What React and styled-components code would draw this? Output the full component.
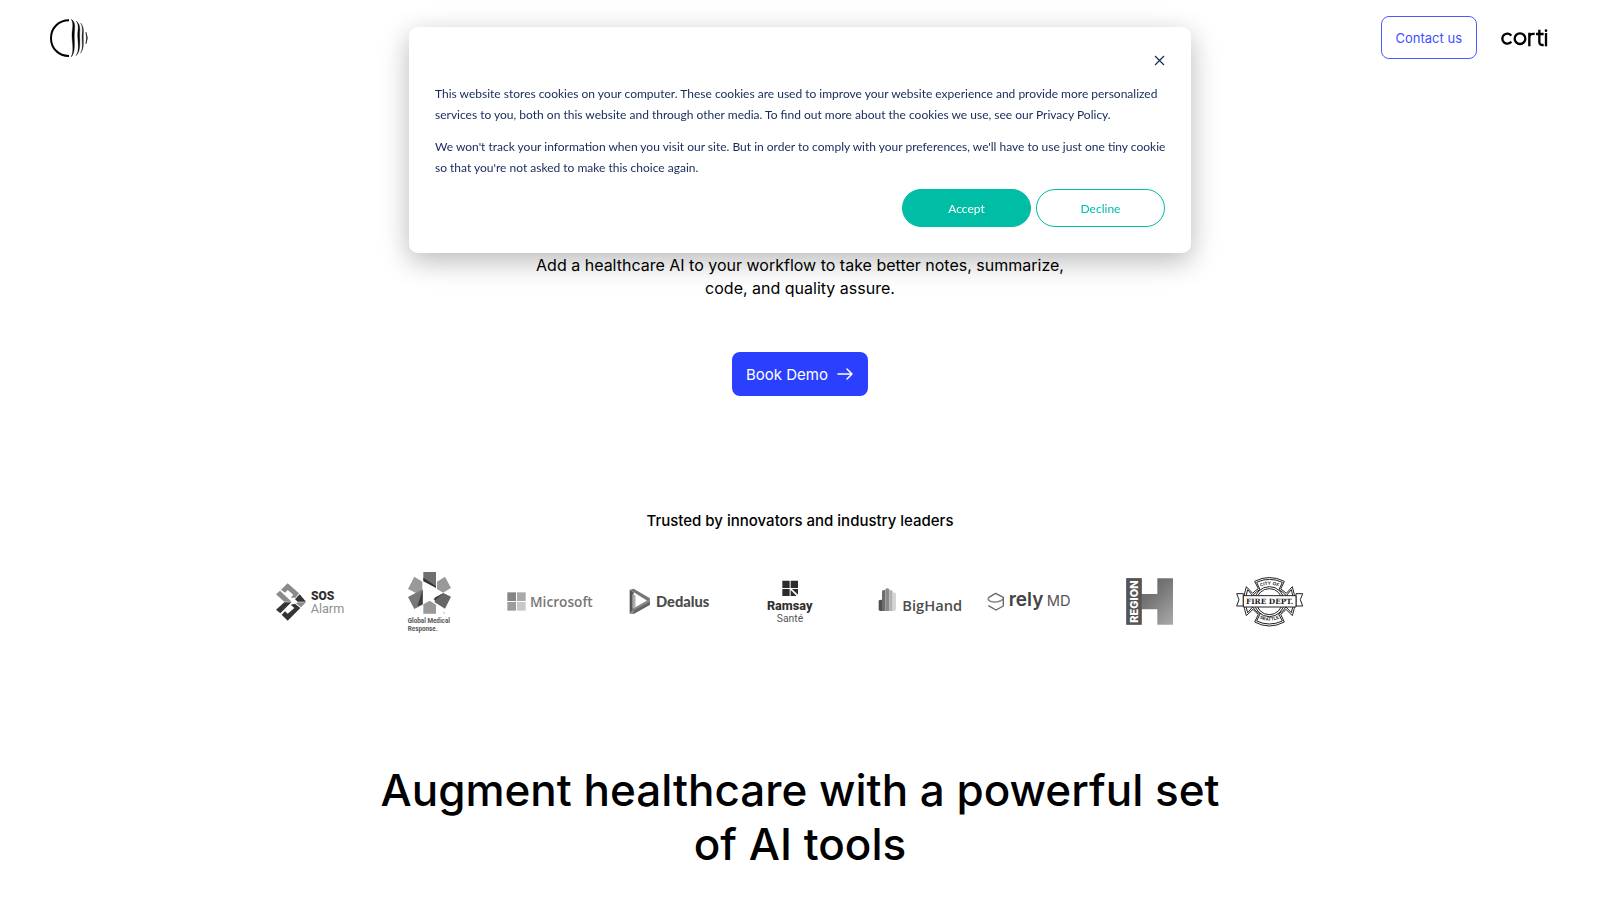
import React from "react";
import styled, { createGlobalStyle } from "styled-components";

const GlobalStyle = createGlobalStyle`
  *, *::before, *::after { box-sizing: border-box; }
  body {
    margin: 0;
    background: #fff;
    color: #000;
    font-family: Inter, "Liberation Sans", sans-serif;
    overflow-x: hidden;
  }
  a { text-decoration: none; }
`;

const Header = styled.header`
  display: flex;
  align-items: center;
  justify-content: space-between;
  height: 75px;
  padding: 0 51px 0 49px;
`;

const HomeLink = styled.a`
  display: flex;
  color: #000;
`;

const HeaderActions = styled.nav`
  display: flex;
  align-items: center;
  gap: 24px;
`;

const ContactLink = styled.a`
  display: flex;
  align-items: center;
  height: 43px;
  padding: 0 14px;
  border: 1px solid #4a5bff;
  border-radius: 8px;
  color: #3d50ff;
  font-size: 13px;
`;

const Hero = styled.section`
  display: flex;
  flex-direction: column;
  align-items: center;
  padding: 179px 24px 0;
`;

const Lead = styled.p`
  max-width: 560px;
  margin: 0 0 52px;
  font-size: 16px;
  line-height: 23px;
  text-align: center;
`;

const DemoLink = styled.a`
  display: flex;
  align-items: center;
  gap: 9px;
  height: 44px;
  padding: 0 14px;
  border-radius: 8px;
  background: #2b3fff;
  color: #fff;
  font-size: 15px;
`;

const Trusted = styled.section`
  padding-top: 114px;
`;

const TrustedTitle = styled.h3`
  margin: 0 0 28px;
  font-size: 15px;
  line-height: 22px;
  font-weight: 500;
  text-align: center;
`;

const LogoRow = styled.ul`
  display: flex;
  flex-wrap: wrap;
  max-width: 1100px;
  margin: 0 auto;
  padding: 0;
  list-style: none;
`;

const LogoItem = styled.li`
  width: 120px;
  height: 90px;

  svg { display: block; }
`;

const ToolsTitle = styled.h2`
  max-width: 870px;
  margin: 0 auto;
  padding: 113px 0 28px;
  font-size: 44px;
  line-height: 54px;
  font-weight: 500;
  text-align: center;
`;

const CookieDialog = styled.section`
  position: fixed;
  z-index: 10;
  top: 27px;
  left: 50%;
  width: min(782px, 94vw);
  transform: translateX(-50%);
  display: flex;
  flex-direction: column;
  padding: 26px;
  border-radius: 9px;
  background: #fff;
  box-shadow: 0 8px 28px rgba(0, 0, 0, 0.28);
  color: #15295a;
  font-family: Lato, "Liberation Sans", sans-serif;
`;

const CloseButton = styled.button`
  display: flex;
  align-self: flex-end;
  margin: 0 0 14px;
  padding: 2px 0 2px;
  border: 0;
  background: none;
  color: #15295a;
  cursor: pointer;
`;

const CookieText = styled.p`
  margin: 0 -8px 11px 0;
  font-size: 12px;
  line-height: 21px;
`;

const CookieActions = styled.div`
  display: flex;
  justify-content: flex-end;
  gap: 5px;
`;

const CookieButton = styled.button`
  width: 129px;
  height: 38px;
  border: 1px solid #00bda5;
  border-radius: 20px;
  background: ${(p) => (p.$filled ? "#00bda5" : "#fff")};
  color: ${(p) => (p.$filled ? "#fff" : "#00bda5")};
  font-family: inherit;
  font-size: 12px;
  cursor: pointer;
`;

function CortiMark() {
  return (
    <svg width="40" height="40" viewBox="57 53 120 120" aria-hidden="true" fill="none" stroke="#000">
      <path d="M117 60C85 60 63 84 63 113.500S85 167 117 167" strokeWidth="6" />
      <path d="M123 57C132 66 127 87 126 100 125 120 134 153 123 170 138 159 132 119 133 101 134 83 138 64 123 57Z" fill="#000" strokeWidth="1" />
      <path d="M138 62C149 74 143 90 143 104 143 122 150 151 138 166 153 153 149 123 149 105 149 88 153 73 138 62Z" fill="#000" strokeWidth="1" />
      <path d="M152 68C160 82 156 97 156 112S160 145 151 159C163 145 160 127 160 112S164 83 152 68Z" fill="#222" stroke="#222" strokeWidth="1" />
      <path d="M168 96Q176 113 168 130Q172 113 168 96Z" fill="#222" stroke="#222" strokeWidth="2" />
    </svg>
  );
}

function CortiWordmark() {
  return (
    <svg width="48" height="20" viewBox="423 83 144 60" role="img" aria-label="corti" fill="none" stroke="#000" strokeWidth="7">
      <path d="M454 106A15 15 0 1 0 454 124" />
      <circle cx="480" cy="115" r="16" />
      <path d="M508 138V97M508 114C508 102 514 99 524 101" />
      <path d="M538 88V125Q538 135 551 134M528 101H551" />
      <path d="M558 98V138" />
      <circle cx="558" cy="91" r="4" fill="#000" stroke="none" />
    </svg>
  );
}

function Logo({ x, y = 0, label, children }) {
  return (
    <LogoItem>
      <svg width="120" height="90" viewBox={`${x} ${y} 360 270`} role="img" aria-label={label}>
        {children}
      </svg>
    </LogoItem>
  );
}

function SosAlarm() {
  return (
    <Logo x={-30} label="SOS Alarm">
      <g fill="#8b8b8b">
        <path d="M63 89L83 70 117 100 107 113H92L100 104 83 90 75 98Z" />
        <path d="M48 103L60 92 95 125H73Z" />
        <path d="M114 127H138L123 142 108 130Z" />
      </g>
      <g fill="#343434">
        <path d="M73 127H94L61 160 48 149Z" />
        <path d="M105 118L119 103 138 125H113Z" />
        <path d="M65 164L75 154 83 161 103 144 92 134 105 131 121 144 83 182Z" />
      </g>
      <text x="153" y="120" fontFamily="Roboto" fontWeight="900" fontSize="36" fill="#303030">SOS</text>
      <text x="152" y="158" fontFamily="Roboto" fontSize="38" fill="#909090">Alarm</text>
    </Logo>
  );
}

function GlobalMedical() {
  return (
    <Logo x={330} label="Global Medical Response">
      <path d="M490 36H528V82L490 60Z" fill="#707070" />
      <path d="M490 53L528 79V84L490 64Z" fill="#333" />
      <path d="M463 50L487 65V90L468 99 444 87Z" fill="#999" />
      <path d="M555 50L573 84 549 98 531 88V65Z" fill="#999" />
      <path d="M444 111L488 88V134L463 147Z" fill="#777" />
      <path d="M488 89V132L472 139Z" fill="#3c3c3c" />
      <path d="M524 112L550 99 573 110 555 146 524 127Z" fill="#666" />
      <path d="M520 118L550 99 526 120Z" fill="#333" />
      <path d="M490 133L509 122 528 134V161H490Z" fill="#999" />
      <path d="M490 65L549 98 490 131Z" fill="#fff" />
      <circle cx="552" cy="159" r="2" fill="#999" />
      <g fontFamily="Roboto" fontSize="19" fontWeight="700" fill="#555">
        <text x="443" y="190">Global Medical</text>
        <text x="443" y="212">Response.</text>
      </g>
    </Logo>
  );
}

function Microsoft() {
  return (
    <Logo x={-30} label="Microsoft">
      <path d="M22 97H48V123H22Z" fill="#858585" />
      <path d="M51 97H77V123H51Z" fill="#aaa" />
      <path d="M22 126H48V152H22Z" fill="#9b9b9b" />
      <path d="M51 126H77V152H51Z" fill="#c8c8c8" />
      <text x="90" y="141" fontFamily="Open Sans" fontWeight="600" fontSize="41" fill="#777">Microsoft</text>
    </Logo>
  );
}

function Dedalus() {
  return (
    <Logo x={330} label="Dedalus">
      <path d="M389 89L401 97V151L389 161Z" fill="#555" />
      <path d="M389 89L401 86 450 115 448 126Z" fill="#777" />
      <path d="M389 161L400 162 450 134V116L437 123 401 144Z" fill="#8a8a8a" />
      <path d="M397 101L407 107V139L397 147Z" fill="#aaa" />
      <path d="M407 107L438 123 407 140Z" fill="#fff" />
      <path d="M401 162L450 134V125L401 151Z" fill="#666" />
      <text x="468" y="142" fontFamily="Lato" fontWeight="900" fontSize="44" fill="#4c4c4c">Dedalus</text>
    </Logo>
  );
}

function Ramsay() {
  return (
    <Logo x={-60} label="Ramsay Santé">
      <g fill="#2c2c2c">
        <path d="M97 62H119V84H97ZM122 62H144V84H122ZM97 87H119V108H97Z" />
        <path d="M126 87H144V104ZM122 90L140 108H122Z" />
      </g>
      <text x="119" y="149" textAnchor="middle" fontFamily="Roboto" fontWeight="800" fontSize="38" fill="#303030">Ramsay</text>
      <text x="120" y="186" textAnchor="middle" fontFamily="Roboto" fontSize="31" fill="#555">Santé</text>
    </Logo>
  );
}

function BigHand() {
  return (
    <Logo x={300} label="BigHand">
      <path d="M386 123Q386 119 396 119V153H391Q386 153 386 148Z" fill="#505050" />
      <path d="M396 94Q396 90 406 90V153H396Z" fill="#6d6d6d" />
      <path d="M406 88Q411 82 418 88V153H406Z" fill="#8a8a8a" />
      <path d="M418 90Q428 89 428 95V153H418Z" fill="#b0b0b0" />
      <path d="M428 97Q438 97 438 102V146Q438 153 428 153Z" fill="#d4d4d4" />
      <text x="457" y="154" fontFamily="Open Sans" fontWeight="600" fontSize="44" fill="#4d4d4d">BigHand</text>
    </Logo>
  );
}

function RelyMd() {
  return (
    <Logo x={-30} label="relyMD">
      <g fill="none" strokeWidth="5" strokeLinejoin="round">
        <path d="M25 113V119Q30 127 45 126C57 125 65 122 70 116" stroke="#8a8a8a" />
        <path d="M25 113L47 100 70 112V138L48 150 25 137" stroke="#666" strokeWidth="4" />
      </g>
      <text x="86" y="139" fontFamily="Inter" fontWeight="600" fontSize="57" fill="#444">rely</text>
      <text x="200" y="139" fontFamily="Inter" fontWeight="400" fontSize="44" fill="#555">MD</text>
    </Logo>
  );
}

function RegionH() {
  return (
    <Logo x={330} label="Region H">
      <defs>
        <linearGradient id="region-fade" x1="0" y1="0" x2="1" y2="1">
          <stop offset="0" stopColor="#555" />
          <stop offset="0.500" stopColor="#777" />
          <stop offset="1" stopColor="#aaa" />
        </linearGradient>
      </defs>
      <path d="M439 55H485V102H532V55H579V194H532V148H485V194H439Z" fill="url(#region-fade)" />
      <path d="M439 55H485V194H439Z" fill="#555" />
      <text transform="translate(474 188) rotate(-90)" fontFamily="Inter" fontWeight="800" fontSize="33" fill="#fff">REGION</text>
    </Logo>
  );
}

function SeattleFire() {
  return (
    <Logo x={-30} y={-15} label="City of Seattle Fire Dept.">
      <g fill="#fff" stroke="#222" strokeWidth="3">
        <path d="M104 49Q148 26 193 49L182 72Q194 80 199 85L217 65Q232 110 217 152L198 133Q191 142 182 148L193 171Q148 195 104 171L115 148Q106 142 99 133L79 152Q64 110 79 65L98 85Q105 77 115 71Z" />
        <path d="M110 52Q148 34 187 52L177 74Q189 81 199 92L214 74Q225 110 214 143L198 126Q190 139 176 147L187 168Q148 186 110 168L120 147Q105 138 98 126L83 143Q71 110 83 74L98 92Q109 78 120 74Z" />
        <circle cx="148" cy="110" r="45" />
        <circle cx="148" cy="110" r="39" />
        <path d="M70 86H50L57 104 50 123H70ZM228 86H248L241 104 248 123H228Z" />
        <path d="M70 92H228V126H70Z" />
      </g>
      <defs>
        <path id="badge-top" d="M121 66Q148 52 176 66" />
        <path id="badge-bottom" d="M113 157Q148 178 184 157" />
      </defs>
      <g fontFamily="Liberation Sans" fontSize="14" fontWeight="700" fill="#222" textAnchor="middle">
        <text><textPath href="#badge-top" startOffset="50%">CITY OF</textPath></text>
        <text><textPath href="#badge-bottom" startOffset="50%">SEATTLE</textPath></text>
      </g>
      <text x="149" y="117" textAnchor="middle" fontFamily="DejaVu Serif" fontWeight="700" fontSize="22" fill="#222">FIRE DEPT.</text>
    </Logo>
  );
}

export default function App() {
  return (
    <>
      <GlobalStyle />
      <Header>
        <HomeLink href="#" aria-label="Home"><CortiMark /></HomeLink>
        <HeaderActions>
          <ContactLink href="#contact">Contact us</ContactLink>
          <HomeLink href="#"><CortiWordmark /></HomeLink>
        </HeaderActions>
      </Header>
      <main>
        <Hero>
          <Lead>
            Add a healthcare AI to your workflow to take better notes, summarize, code, and quality assure.
          </Lead>
          <DemoLink href="#demo">
            Book Demo
            <svg width="17" height="12" viewBox="0 0 17 12" fill="none" stroke="currentColor" strokeWidth="1.500" strokeLinecap="round" strokeLinejoin="round" aria-hidden="true">
              <path d="M1 6H15M10 1L15 6 10 11" />
            </svg>
          </DemoLink>
        </Hero>
        <Trusted>
          <TrustedTitle>Trusted by innovators and industry leaders</TrustedTitle>
          <LogoRow>
            <SosAlarm />
            <GlobalMedical />
            <Microsoft />
            <Dedalus />
            <Ramsay />
            <BigHand />
            <RelyMd />
            <RegionH />
            <SeattleFire />
          </LogoRow>
        </Trusted>
        <ToolsTitle>Augment healthcare with a powerful set of AI tools</ToolsTitle>
      </main>
      <CookieDialog role="dialog" aria-label="Cookie consent">
        <CloseButton type="button" aria-label="Close">
          <svg width="12" height="12" viewBox="0 0 12 12" fill="none" stroke="currentColor" strokeWidth="1.200" aria-hidden="true">
            <path d="M2 1L11 10M11 1L2 10" />
          </svg>
        </CloseButton>
        <CookieText>
          This website stores cookies on your computer. These cookies are used to improve your website experience and provide more personalized services to you, both on this website and through other media. To find out more about the cookies we use, see our Privacy Policy.
        </CookieText>
        <CookieText>
          We won't track your information when you visit our site. But in order to comply with your preferences, we'll have to use just one tiny cookie so that you're not asked to make this choice again.
        </CookieText>
        <CookieActions>
          <CookieButton type="button" $filled>Accept</CookieButton>
          <CookieButton type="button">Decline</CookieButton>
        </CookieActions>
      </CookieDialog>
    </>
  );
}
